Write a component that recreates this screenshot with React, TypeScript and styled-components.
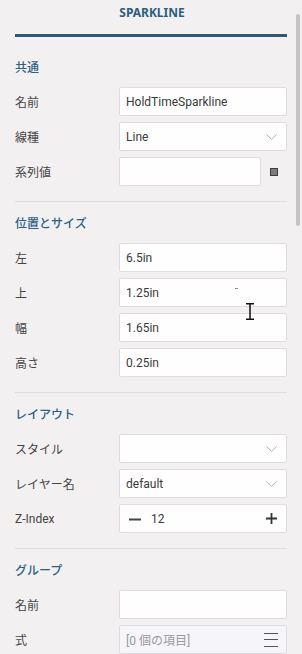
import React from "react";
import styled, { createGlobalStyle } from "styled-components";

const GlobalStyle = createGlobalStyle`
  html, body {
    margin: 0;
    padding: 0;
    background: #f3f0f1;
  }
  body {
    font-family: Roboto, "Noto Sans CJK JP", sans-serif;
    color: #3c3c3c;
  }
  * { box-sizing: border-box; }
`;

const Panel = styled.div`
  position: relative;
  width: 302px;
  height: 654px;
  overflow: hidden;
  background: #f3f0f1;
`;

const ScrollThumb = styled.div`
  position: absolute;
  right: 2px;
  top: 14px;
  width: 4px;
  height: 212px;
  border-radius: 2px;
  background: #c5c2c3;
`;

const Content = styled.div`
  width: 302px;
  padding: 0 15px;
`;

const Header = styled.div`
  display: flex;
  justify-content: center;
  align-items: flex-end;
  height: 37px;
  border-bottom: 3px solid #2d5b76;
  padding-bottom: 14px;
`;

const Title = styled.div`
  font-family: "Noto Sans", sans-serif;
  font-size: 12px;
  font-weight: 700;
  color: #2d5e80;
  line-height: 14px;
  margin-left: 2px;
`;

const Section = styled.section<{ $first?: boolean; $last?: boolean }>`
  display: flex;
  flex-direction: column;
  gap: 6px;
  padding-top: ${(p) => (p.$first ? "23px" : "14px")};
  padding-bottom: ${(p) => (p.$last ? "0" : "15px")};
  border-bottom: ${(p) => (p.$last ? "none" : "1px solid #e0dcdd")};
`;

const SectionTitle = styled.div`
  font-size: 12px;
  line-height: 16px;
  font-weight: 500;
  color: #2c6186;
  margin-bottom: 5px;
`;

const Row = styled.div`
  display: grid;
  grid-template-columns: 104px 1fr;
  align-items: center;
  height: 29px;
`;

const Label = styled.div`
  font-size: 12px;
  color: #454545;
  white-space: nowrap;
`;

const Field = styled.div<{ $disabled?: boolean }>`
  position: relative;
  display: flex;
  align-items: center;
  height: 29px;
  padding: 0 6px;
  background: ${(p) => (p.$disabled ? "#f6f5f9" : "#fefefe")};
  border: 1px solid #e0dcdd;
  border-radius: 2px;
  font-size: 12px;
  color: ${(p) => (p.$disabled ? "#9a9a9a" : "#3a3a3a")};
  gap: 10px;
`;

const FieldText = styled.span`
  flex: 1;
  white-space: nowrap;
`;

const ColorRow = styled.div`
  display: grid;
  grid-template-columns: 1fr 26px;
  align-items: center;
`;

const Swatch = styled.div`
  justify-self: end;
  margin-right: 9px;
  width: 8px;
  height: 8px;
  background: #7d7d7d;
  border: 1px solid #3d3d3d;
`;

const Chevron = () => (
  <svg width="11" height="6" viewBox="0 0 11 6" style={{ marginRight: 3 }}>
    <path d="M0.5 0.5 L5.5 5.3 L10.5 0.5" fill="none" stroke="#acacac" strokeWidth="0.9" />
  </svg>
);

const Minus = () => (
  <svg width="12" height="12" viewBox="0 0 12 12">
    <path d="M0 6.5 H12" stroke="#444" strokeWidth="2" />
  </svg>
);

const Plus = () => (
  <svg width="11" height="11" viewBox="0 0 11 11" style={{ marginRight: 3 }}>
    <path d="M0 5.5 H11 M5.5 0 V11" stroke="#333" strokeWidth="1.8" />
  </svg>
);

const Hamburger = () => (
  <svg width="14" height="16" viewBox="0 0 14 16" style={{ marginRight: 2 }}>
    <path d="M0 1.5 H14 M0 7.5 H14 M0 14.5 H14" stroke="#555" strokeWidth="1" />
  </svg>
);

const IBeam = styled.svg`
  position: absolute;
  left: 245px;
  top: 303px;
`;

const Dot = styled.div`
  position: absolute;
  left: 235px;
  top: 288px;
  width: 3px;
  height: 1px;
  background: #8a8a8a;
`;

const Stepper = styled.div`
  display: flex;
  align-items: center;
  flex: 1;
  gap: 10px;
  padding-left: 3px;
`;

export default function App() {
  return (
    <>
      <GlobalStyle />
      <Panel>
        <Content>
          <Header>
            <Title>SPARKLINE</Title>
          </Header>

          <Section $first>
            <SectionTitle>共通</SectionTitle>
            <Row>
              <Label>名前</Label>
              <Field><FieldText>HoldTimeSparkline</FieldText></Field>
            </Row>
            <Row>
              <Label>線種</Label>
              <Field><FieldText>Line</FieldText><Chevron /></Field>
            </Row>
            <Row>
              <Label>系列値</Label>
              <ColorRow>
                <Field />
                <Swatch />
              </ColorRow>
            </Row>
          </Section>

          <Section>
            <SectionTitle>位置とサイズ</SectionTitle>
            <Row>
              <Label>左</Label>
              <Field><FieldText>6.5in</FieldText></Field>
            </Row>
            <Row>
              <Label>上</Label>
              <Field><FieldText>1.25in</FieldText></Field>
            </Row>
            <Row>
              <Label>幅</Label>
              <Field><FieldText>1.65in</FieldText></Field>
            </Row>
            <Row>
              <Label>高さ</Label>
              <Field><FieldText>0.25in</FieldText></Field>
            </Row>
          </Section>

          <Section>
            <SectionTitle>レイアウト</SectionTitle>
            <Row>
              <Label>スタイル</Label>
              <Field><FieldText></FieldText><Chevron /></Field>
            </Row>
            <Row>
              <Label>レイヤー名</Label>
              <Field><FieldText>default</FieldText><Chevron /></Field>
            </Row>
            <Row>
              <Label>Z-Index</Label>
              <Field>
                <Stepper>
                  <Minus />
                  <span>12</span>
                </Stepper>
                <Plus />
              </Field>
            </Row>
          </Section>

          <Section $last>
            <SectionTitle>グループ</SectionTitle>
            <Row>
              <Label>名前</Label>
              <Field />
            </Row>
            <Row>
              <Label>式</Label>
              <Field $disabled><FieldText>[0 個の項目]</FieldText><Hamburger /></Field>
            </Row>
          </Section>
        </Content>
        <ScrollThumb />
        <Dot />
        <IBeam width="10" height="17" viewBox="0 0 10 17">
          <path d="M1 0.75 H9 M1 16.25 H9 M5 0.75 V16.25" stroke="#111" strokeWidth="1.5" fill="none" />
        </IBeam>
      </Panel>
    </>
  );
}
